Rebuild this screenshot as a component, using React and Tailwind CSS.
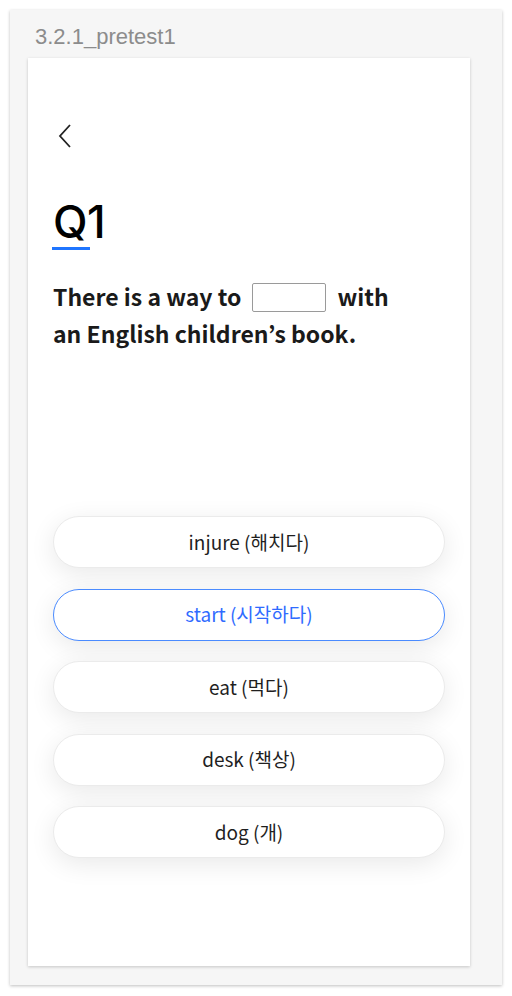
import React from "react";

const options = [
  { label: "injure (해치다)", selected: false },
  { label: "start (시작하다)", selected: true },
  { label: "eat (먹다)", selected: false },
  { label: "desk (책상)", selected: false },
  { label: "dog (개)", selected: false },
];

const App = () => {
  return (
    <div className="w-[512px] h-[996px] bg-white p-[10px] pb-[11px] pr-[10px]">
      <div className="h-full bg-[#f6f6f6] shadow-[0_1px_3px_rgba(0,0,0,0.25)] pl-[18px] pr-[32px] flex flex-col">
        <div className="h-[48px] pt-[14px] pl-[7px] text-[22px] leading-[26px] text-[#8c8c8c] font-['Liberation_Sans',sans-serif]">
          3.2.1_pretest1
        </div>
        <div className="h-[908px] bg-white shadow-[0_1px_3px_rgba(0,0,0,0.2)] px-[25px] flex flex-col font-['Noto_Sans_CJK_KR',sans-serif]">
          <div className="mt-[65px] h-[26px] flex items-center">
            <svg width="16" height="26" viewBox="0 0 16 26" className="ml-[4px]">
              <polyline points="13,2 3,13 13,24" fill="none" stroke="#222" strokeWidth="1.8" />
            </svg>
          </div>
          <div className="mt-[49px] text-[45px] leading-[48px] font-medium text-black font-['Inter',sans-serif] tracking-[-0.5px]">
            Q1
          </div>
          <div className="mt-[1px] -ml-[1px] w-[38px] h-[3px] bg-[#1f75ff]" />
          <p className="mt-[28px] text-[23px] leading-[37px] font-bold text-[#1a1a1a]">
            There is a way to
            <span className="inline-block align-middle w-[74px] h-[29px] border-[1.5px] border-[#9a9a9a] rounded-[2px] mx-[11px] -mt-[4px]" />
            with
            <br />
            an English children’s book.
          </p>
          <div className="mt-[164px] flex flex-col gap-[20.5px]">
            {options.map((o) => (
              <button
                key={o.label}
                className={
                  o.selected
                    ? "h-[52px] rounded-full bg-white border-[1.5px] border-[#4a8bff] text-[#2f6bff] text-[19px] shadow-[0_6px_26px_rgba(0,0,0,0.09)]"
                    : "h-[52px] rounded-full bg-white border border-[#ebebeb] text-[#1f1f1f] text-[19px] shadow-[0_6px_26px_rgba(0,0,0,0.09)]"
                }
              >
                {o.label}
              </button>
            ))}
          </div>
        </div>
      </div>
    </div>
  );
};

export default App;
